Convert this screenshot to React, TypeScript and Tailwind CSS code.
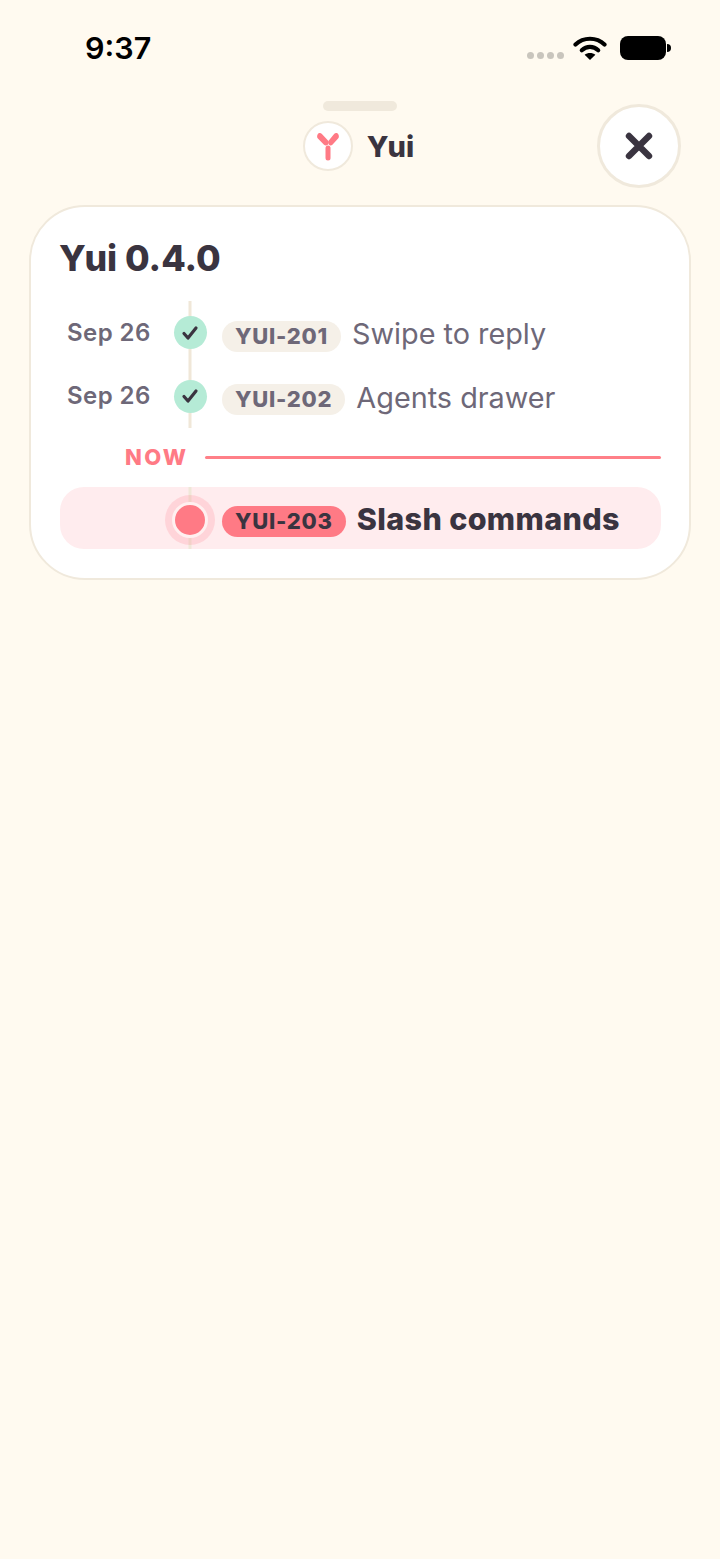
const rows = [
  { date: 'Sep 26', id: 'YUI-201', title: 'Swipe to reply' },
  { date: 'Sep 26', id: 'YUI-202', title: 'Agents drawer' },
];

function StatusBar() {
  return (
    <div className="flex h-[96px] items-start justify-between pl-[85px] pr-[49px] pt-[28px]">
      <span className="text-[30.5px] leading-[40px] font-semibold text-black">9:37</span>
      <div className="flex items-center pt-[7px]">
        <div className="mr-[9px] mt-[14px] flex gap-[3px]">
          <span className="h-[7px] w-[7px] rounded-full bg-[#c9c5bd]" />
          <span className="h-[7px] w-[7px] rounded-full bg-[#c9c5bd]" />
          <span className="h-[7px] w-[7px] rounded-full bg-[#c9c5bd]" />
          <span className="h-[7px] w-[7px] rounded-full bg-[#c9c5bd]" />
        </div>
        <svg width="34" height="26" viewBox="0 0 34 26" fill="none">
          <path d="M2.5 9.5C10.5 1.8 23.5 1.8 31.5 9.5" stroke="#000" strokeWidth="4.2" strokeLinecap="round" />
          <path d="M8.8 15.2C13.5 10.8 20.5 10.8 25.2 15.2" stroke="#000" strokeWidth="4.2" strokeLinecap="round" />
          <path d="M17 25L11.6 19.8C14.6 17.3 19.4 17.3 22.4 19.8Z" fill="#000" />
        </svg>
        <div className="ml-[13px] flex items-center">
          <div className="h-[24px] w-[46px] rounded-[8px] bg-black" />
          <div className="ml-[1px] h-[8px] w-[4px] rounded-r-full bg-black" />
        </div>
      </div>
    </div>
  );
}

function Rail() {
  return <span className="absolute inset-y-0 left-1/2 w-[3px] -translate-x-1/2 bg-[#f0e7d8]" />;
}

export default function App() {
  return (
    <div className="min-h-[1559px] bg-[#fffaf0] font-['Inter',sans-serif]">
      <StatusBar />

      <div className="relative mt-[8px] grid h-[84px] grid-cols-[1fr_auto_1fr] items-center">
        <span className="absolute left-1/2 top-[-3px] h-[10px] w-[74px] -translate-x-1/2 rounded-full bg-[#f0e9dc]" />
        <div />
        <div className="mr-[3px] flex items-center gap-[14px]">
          <div className="flex h-[50px] w-[50px] items-center justify-center rounded-full border-2 border-[#f0e9dc] bg-white">
            <svg width="30" height="32" viewBox="0 0 30 32" fill="none">
              <path d="M4.6 4.4C5.6 2.9 7.6 2.7 8.9 3.9L15 10.6C15.9 11.6 15.8 13 15 14.6C13.8 15.9 12 15.7 11 14.7L4.9 8.6C3.9 7.6 3.9 5.6 4.6 4.4Z" fill="#ff7a85" />
              <path d="M25.4 4.4C24.4 2.9 22.4 2.7 21.1 3.9L15.8 10.6C14.9 11.6 14.9 13 15.8 14.6C17 15.9 18.4 15.7 19.4 14.7L25.1 8.6C26.1 7.6 26.1 5.6 25.4 4.4Z" fill="#ff7a85" />
              <path d="M15 18V28" stroke="#ff7a85" strokeWidth="5" strokeLinecap="round" />
            </svg>
          </div>
          <span className="text-[29px] leading-none font-extrabold text-[#3a3440]">Yui</span>
        </div>
        <div className="flex justify-end pr-[39px]">
          <button className="flex h-[84px] w-[84px] items-center justify-center rounded-full border-[3px] border-[#f0e9dc] bg-white">
            <svg width="28" height="28" viewBox="0 0 28 28" fill="none">
              <path d="M4 4L24 24M24 4L4 24" stroke="#3a3440" strokeWidth="6.4" strokeLinecap="round" />
            </svg>
          </button>
        </div>
      </div>

      <div className="ml-[29px] mt-[17px] h-[375px] w-[662px] rounded-[56px] border-2 border-[#f0e9dc] bg-white pl-[29px] pr-[28px] pt-[28px]">
        <h1 className="-ml-[1px] h-[66px] text-[35.7px] leading-[46px] font-extrabold text-[#3a3440]">Yui 0.4.0</h1>

        {rows.map((row) => (
          <div key={row.id} className="flex h-[63.5px] items-center">
            <span className="ml-[7px] w-[83px] whitespace-nowrap text-[24px] font-semibold tracking-[0.45px] text-[#6e6878]">{row.date}</span>
            <div className="relative ml-[23px] flex w-[34px] items-center justify-center self-stretch">
              <Rail />
              <span className="relative flex h-[33px] w-[33px] items-center justify-center rounded-full bg-[#b5ebd6]">
                <svg width="18" height="18" viewBox="0 0 18 18" fill="none">
                  <path d="M3 9.5L7 14L15 4" stroke="#3a3440" strokeWidth="3.2" strokeLinecap="round" strokeLinejoin="round" />
                </svg>
              </span>
            </div>
            <span className="ml-[15px] mt-[7px] rounded-full bg-[#f5f0e8] px-[13px] py-[1px] text-[22px] leading-[29px] font-extrabold tracking-[0.75px] text-[#6e6878]">
              {row.id}
            </span>
            <span className="ml-[11px] mt-[2px] text-[28.8px] text-[#6e6878]">{row.title}</span>
          </div>
        ))}

        <div className="flex h-[59px] items-center">
          <span className="ml-[65px] w-[63px] whitespace-nowrap text-[22px] font-extrabold tracking-[2.3px] text-[#ff7a85]">NOW</span>
          <span className="ml-[17px] h-[3px] flex-1 rounded-full bg-[#ff8088]" />
        </div>

        <div className="flex h-[62px] items-center rounded-[24px] bg-[#ffecee]">
          <div className="relative ml-[105px] flex w-[50px] items-center justify-center self-stretch">
            <Rail />
            <span className="relative mt-[4px] flex h-[50px] w-[50px] items-center justify-center rounded-full bg-[#ff7a85]/20">
              <span className="h-[36px] w-[36px] rounded-full border-[3px] border-[#fff0f0] bg-[#ff7a85]" />
            </span>
          </div>
          <span className="ml-[7px] mt-[7px] rounded-full bg-[#ff7a85] px-[13px] py-[1px] text-[22px] leading-[29px] font-extrabold tracking-[0.75px] text-[#3a3440]">
            YUI-203
          </span>
          <span className="ml-[11px] mt-[1px] text-[30.5px] tracking-[0.35px] font-extrabold text-[#3a3440]">Slash commands</span>
        </div>
      </div>
    </div>
  );
}
